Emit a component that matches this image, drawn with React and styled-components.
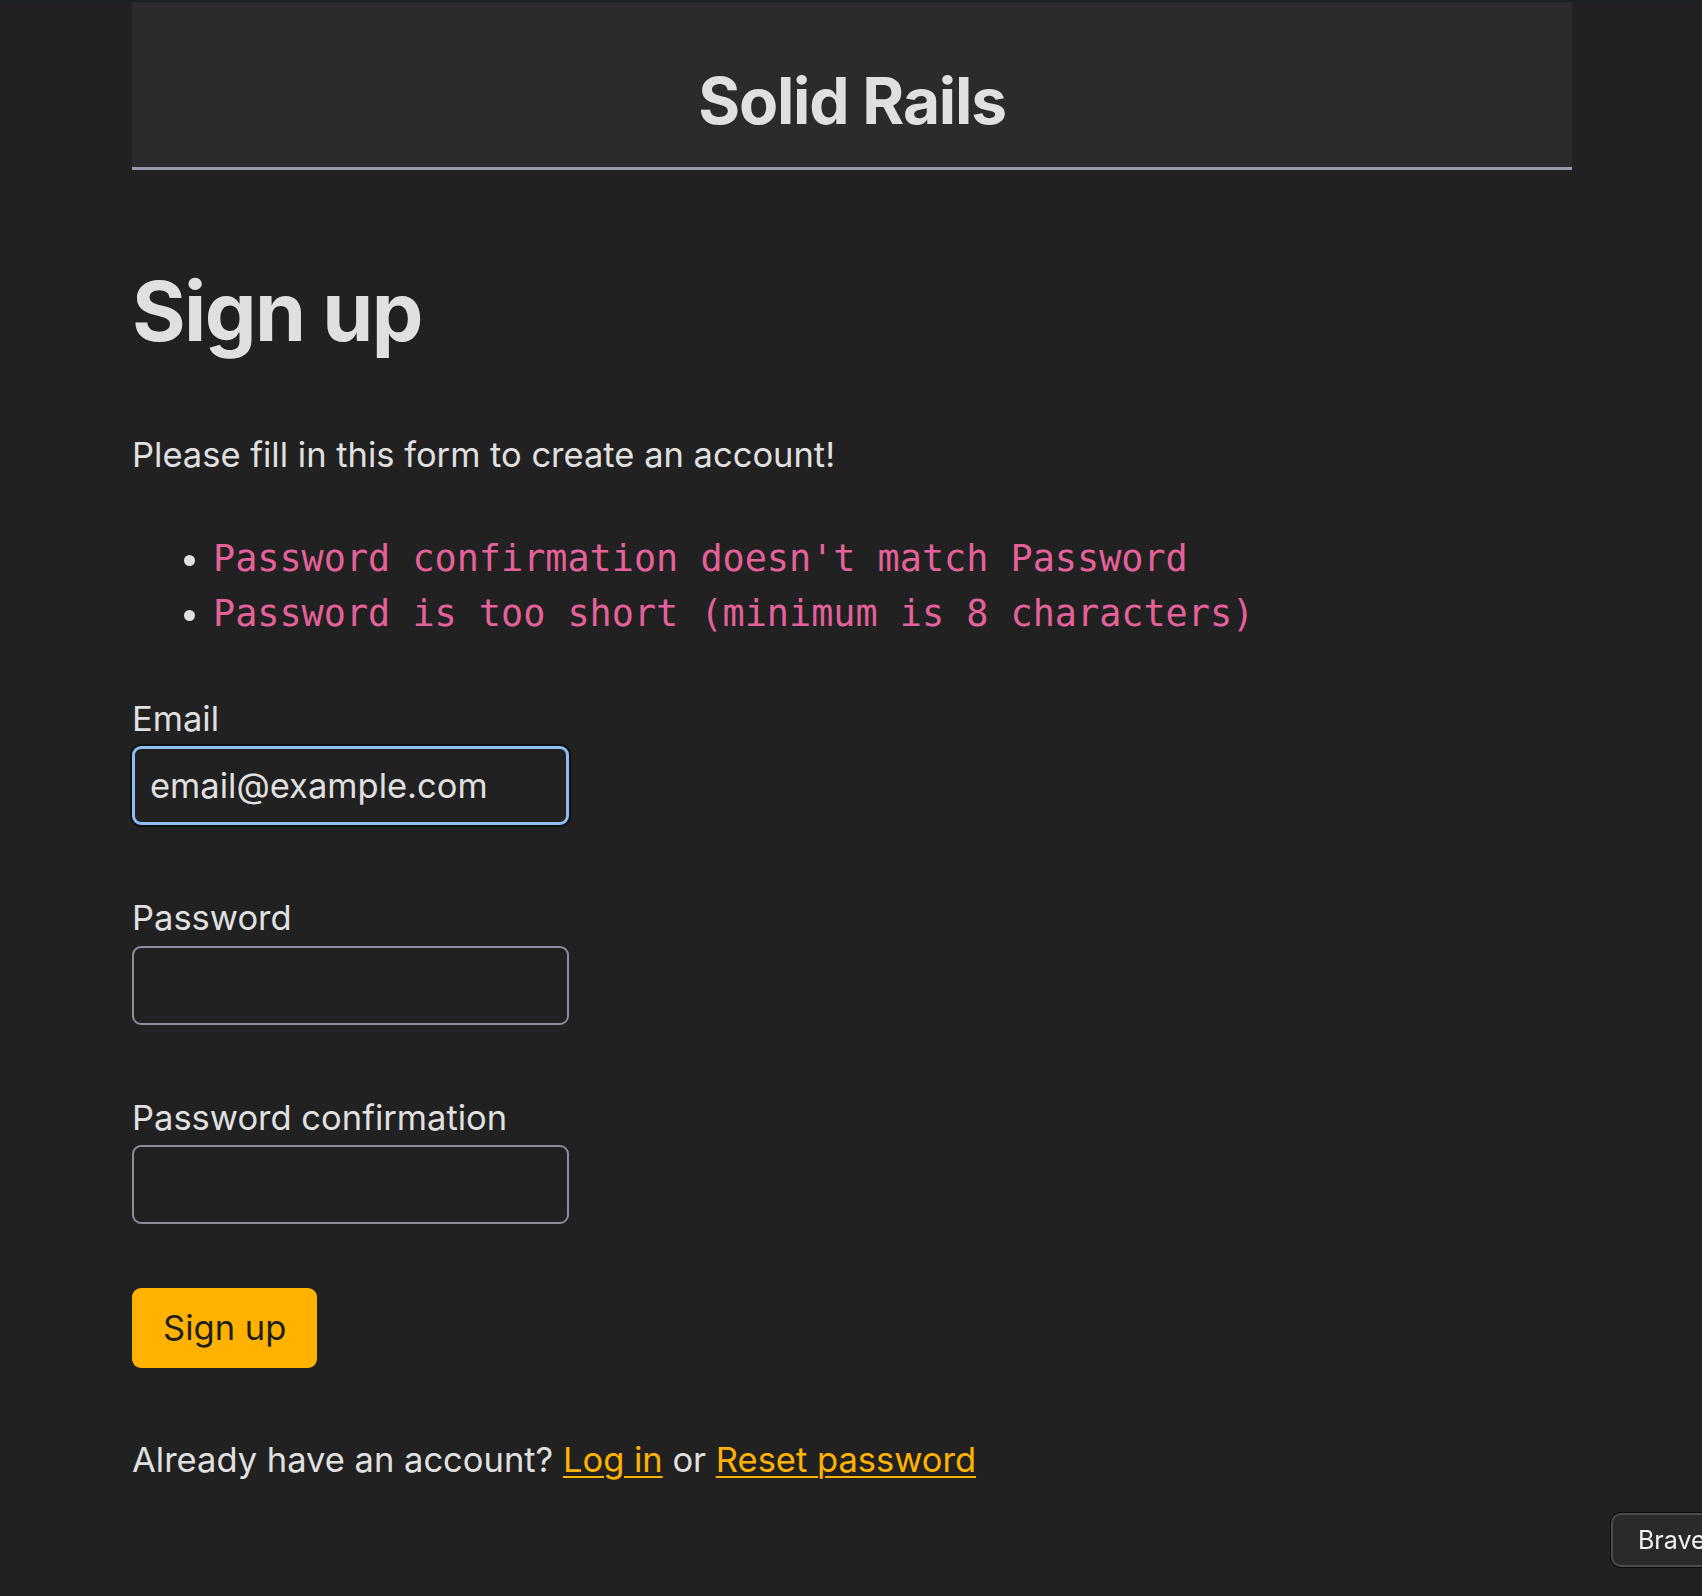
import React from "react";
import styled, { createGlobalStyle } from "styled-components";

const GlobalStyle = createGlobalStyle`
  html, body {
    margin: 0;
    padding: 0;
    background: #212121;
  }
  body {
    border-top: 2px solid #1d2024;
    font-family: Inter, "Noto Sans", "Liberation Sans", sans-serif;
    color: #e0e0e0;
    min-height: 1594px;
  }
  * { box-sizing: border-box; }
`;

const Container = styled.div`
  width: 1440px;
  margin: 0 0 0 132px;
`;

const Header = styled.header`
  height: 168px;
  background: #2b2b2b;
  border-bottom: 3px solid #9a9aae;
  display: flex;
  justify-content: center;
  padding-top: 67px;
`;

const Brand = styled.h2`
  margin: 0;
  font-size: 64px;
  line-height: 1;
  font-weight: 700;
  letter-spacing: -1.2px;
  color: #e0e0e0;
`;

const Main = styled.main`
  padding-top: 101px;
  display: flex;
  flex-direction: column;
  align-items: flex-start;
`;

const Title = styled.h1`
  margin: 0;
  font-size: 82px;
  line-height: 1;
  font-weight: 700;
  letter-spacing: -1.6px;
  color: #e0e0e0;
`;

const Lead = styled.p`
  margin: 85px 0 0;
  font-size: 34.5px;
  line-height: 1;
  color: #e0e0e0;
`;

const ErrorList = styled.ul`
  margin: 58px 0 0;
  padding-left: 81px;
  font-family: "DejaVu Sans Mono", "Liberation Mono", monospace;
  font-size: 36.8px;
  line-height: 55.5px;
`;

const ErrorItem = styled.li`
  color: #e4619a;
  &::marker {
    color: #e0e0e0;
  }
`;

const Field = styled.div`
  display: flex;
  flex-direction: column;
  gap: 10px;
  margin-top: ${(p) => p.$top}px;
`;

const Label = styled.label`
  font-size: 34.5px;
  line-height: 1;
  color: #e0e0e0;
`;

const Input = styled.input`
  width: 437px;
  height: 79px;
  background: #212121;
  border-style: solid;
  border-color: ${(p) => (p.$focused ? "#8cbdf3" : "#8d8d9c")};
  border-width: ${(p) => (p.$focused ? "3px" : "2px")};
  box-shadow: ${(p) => (p.$focused ? "0 0 0 2px #111" : "none")};
  border-radius: 9px;
  padding: 0 15px;
  font-family: Inter, "Noto Sans", sans-serif;
  font-size: 34.5px;
  color: #e0e0e0;
  outline: none;
`;

const Button = styled.button`
  margin-top: 64px;
  height: 80px;
  padding: 0 31px;
  background: #ffb300;
  color: #1f1f1f;
  border: none;
  border-radius: 9px;
  font-family: Inter, "Noto Sans", sans-serif;
  font-size: 34.5px;
  line-height: 1;
`;

const Footer = styled.p`
  margin: 75px 0 0;
  font-size: 34.5px;
  line-height: 1;
  color: #e0e0e0;
`;

const Link = styled.a`
  color: #ffb300;
  text-decoration: underline;
  text-underline-offset: 4px;
  text-decoration-thickness: 2px;
`;

const BraveTab = styled.div`
  position: fixed;
  left: 1611px;
  top: 1513px;
  width: 140px;
  height: 54px;
  border-radius: 10px;
  background: #2a2a2a;
  border: 2px solid #4c4c4c;
  box-shadow: 0 0 0 1px #0c0c0c;
  padding-left: 25px;
  display: flex;
  align-items: center;
  font-family: Inter, "Noto Sans", sans-serif;
  font-size: 25px;
  color: #f2f2f2;
`;

export default function App() {
  return (
    <>
      <GlobalStyle />
      <Container>
        <Header>
          <Brand>Solid Rails</Brand>
        </Header>
        <Main>
          <Title>Sign up</Title>
          <Lead>Please fill in this form to create an account!</Lead>
          <ErrorList>
            <ErrorItem>Password confirmation doesn't match Password</ErrorItem>
            <ErrorItem>Password is too short (minimum is 8 characters)</ErrorItem>
          </ErrorList>
          <Field $top={60}>
            <Label>Email</Label>
            <Input $focused defaultValue="email@example.com" />
          </Field>
          <Field $top={76}>
            <Label>Password</Label>
            <Input type="password" />
          </Field>
          <Field $top={76}>
            <Label>Password confirmation</Label>
            <Input type="password" />
          </Field>
          <Button>Sign up</Button>
          <Footer>
            Already have an account? <Link href="#">Log in</Link> or{" "}
            <Link href="#">Reset password</Link>
          </Footer>
        </Main>
      </Container>
      <BraveTab>Brave</BraveTab>
    </>
  );
}
